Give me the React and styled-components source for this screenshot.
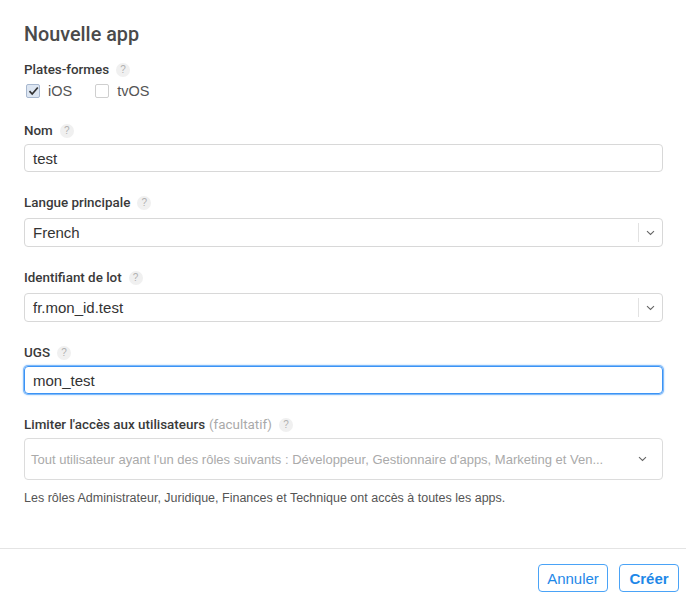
import React from "react";
import styled, { createGlobalStyle } from "styled-components";

const Global = createGlobalStyle`
    body {
        margin: 0;
        background: #fff;
        font-family: "Liberation Sans", Arial, sans-serif;
        color: #333;
    }
`

const Page = styled.div`
    width: 686px;
    height: 602px;
    display: flex;
    flex-direction: column;
    box-sizing: border-box;
`
const Body = styled.div`
    padding: 23px 23px 0 24px;
    display: flex;
    flex-direction: column;
    flex: 1;
`
const Title = styled.h1`
    margin: 0 0 15px;
    font-family: Roboto, "Liberation Sans", sans-serif;
    font-size: 19.8px;
    line-height: 24px;
    font-weight: 500;
    color: #4a4a4a;
`
const Field = styled.div`
    display: flex;
    flex-direction: column;
    margin-bottom: ${p => p.$mb || 23}px;
`
const Label = styled.div`
    display: flex;
    align-items: center;
    gap: 7px;
    font-family: Roboto, "Liberation Sans", sans-serif;
    font-size: 13.4px;
    line-height: 16px;
    font-weight: 500;
    color: #3a3a3a;
    margin-bottom: ${p => p.$mb ?? 5}px;
`
const Optional = styled.span`
    font-weight: 400;
    color: #aaa;
    margin-left: -3px;
`
const Help = styled.span`
    width: 14px;
    height: 14px;
    border-radius: 50%;
    background: #f0f0f0;
    color: #b0b0b0;
    font-family: "Liberation Sans", Arial, sans-serif;
    font-size: 10px;
    font-weight: 400;
    display: inline-flex;
    align-items: center;
    justify-content: center;
`
const CheckRow = styled.div`
    display: flex;
    align-items: center;
    height: 20px;
    gap: 21px;
`
const CheckItem = styled.label`
    display: flex;
    align-items: center;
    gap: 8px;
    font-size: 14.5px;
    color: #555;
`
const Box = styled.span`
    width: 12px;
    height: 12px;
    border-radius: 2px;
    border: 1px solid ${p => p.$on ? "#a8b8cf" : "#cfcfcf"};
    background: ${p => p.$on ? "#dde6f2" : "#fff"};
    margin-left: 2px;
    display: inline-flex;
    align-items: center;
    justify-content: center;
`
const Input = styled.div`
    height: 28px;
    box-sizing: border-box;
    border: 1px solid ${p => p.$focus ? "#3b93f5" : "#d8d8d8"};
    box-shadow: ${p => p.$focus ? "0 0 0 1px #7fbaf9, 0 0 2px 1px #a9d0fb" : "none"};
    border-radius: 4px;
    padding: 0 8px;
    display: flex;
    align-items: center;
    font-size: 15px;
    color: #333;
`
const Select = styled.div`
    height: 29px;
    box-sizing: border-box;
    border: 1px solid #d8d8d8;
    border-radius: 4px;
    display: flex;
    align-items: center;
    font-size: 15px;
    color: #333;
`
const SelectText = styled.div`
    flex: 1;
    padding-left: 8px;
`
const Divider = styled.span`
    width: 1px;
    height: 19px;
    background: #e2e2e2;
`
const Arrow = styled.span`
    width: 23px;
    display: flex;
    justify-content: center;
    align-items: center;
`
const Multi = styled.div`
    height: 42px;
    box-sizing: border-box;
    border: 1px solid #dcdcdc;
    border-radius: 4px;
    display: flex;
    align-items: center;
    padding: 0 15px 0 6px;
    font-size: 13px;
    color: #aaa;
    justify-content: space-between;
`
const Note = styled.div`
    font-size: 12.5px;
    line-height: 16px;
    color: #555;
    margin-top: -13px;
`
const Footer = styled.div`
    border-top: 1px solid #e4e4e4;
    height: 54px;
    display: flex;
    justify-content: flex-end;
    align-items: flex-start;
    padding: 15px 7px 0 0;
    gap: 11px;
    box-sizing: border-box;
`
const Button = styled.button`
    height: 28px;
    width: ${p => p.$w}px;
    border: 1px solid #4aa3f7;
    border-radius: 4px;
    background: #fff;
    color: #1e88e8;
    font-family: inherit;
    font-size: 15px;
    font-weight: ${p => p.$primary ? 700 : 400};
    padding: 0;
    cursor: pointer;
`

const Chevron = () => (
    <svg width="9" height="6" viewBox="0 0 9 6">
        <path d="M1 1.2 L4.5 4.5 L8 1.2" fill="none" stroke="#666" strokeWidth="1.1" />
    </svg>
)

const Check = () => (
    <svg width="11" height="10" viewBox="0 0 11 10">
        <path d="M1.5 5.2 L4.2 8 L9.8 1.5" fill="none" stroke="#333" strokeWidth="1.7" />
    </svg>
)

export default function App(){
    return(
        <Page>
            <Global />
            <Body>
                <Title>Nouvelle app</Title>
                <Field $mb={22}>
                    <Label $mb={3}>Plates-formes <Help>?</Help></Label>
                    <CheckRow>
                        <CheckItem><Box $on><Check /></Box>iOS</CheckItem>
                        <CheckItem><Box />tvOS</CheckItem>
                    </CheckRow>
                </Field>
                <Field>
                    <Label>Nom <Help>?</Help></Label>
                    <Input>test</Input>
                </Field>
                <Field>
                    <Label $mb={7}>Langue principale <Help>?</Help></Label>
                    <Select>
                        <SelectText>French</SelectText>
                        <Divider />
                        <Arrow><Chevron /></Arrow>
                    </Select>
                </Field>
                <Field>
                    <Label $mb={7}>Identifiant de lot <Help>?</Help></Label>
                    <Select>
                        <SelectText>fr.mon_id.test</SelectText>
                        <Divider />
                        <Arrow><Chevron /></Arrow>
                    </Select>
                </Field>
                <Field>
                    <Label>UGS <Help>?</Help></Label>
                    <Input $focus>mon_test</Input>
                </Field>
                <Field>
                    <Label>Limiter l'accès aux utilisateurs <Optional>(facultatif)</Optional> <Help>?</Help></Label>
                    <Multi>
                        <span>Tout utilisateur ayant l'un des rôles suivants : Développeur, Gestionnaire d'apps, Marketing et Ven...</span>
                        <Chevron />
                    </Multi>
                </Field>
                <Note>Les rôles Administrateur, Juridique, Finances et Technique ont accès à toutes les apps.</Note>
            </Body>
            <Footer>
                <Button $w={70}>Annuler</Button>
                <Button $w={60} $primary>Créer</Button>
            </Footer>
        </Page>
    )
}
